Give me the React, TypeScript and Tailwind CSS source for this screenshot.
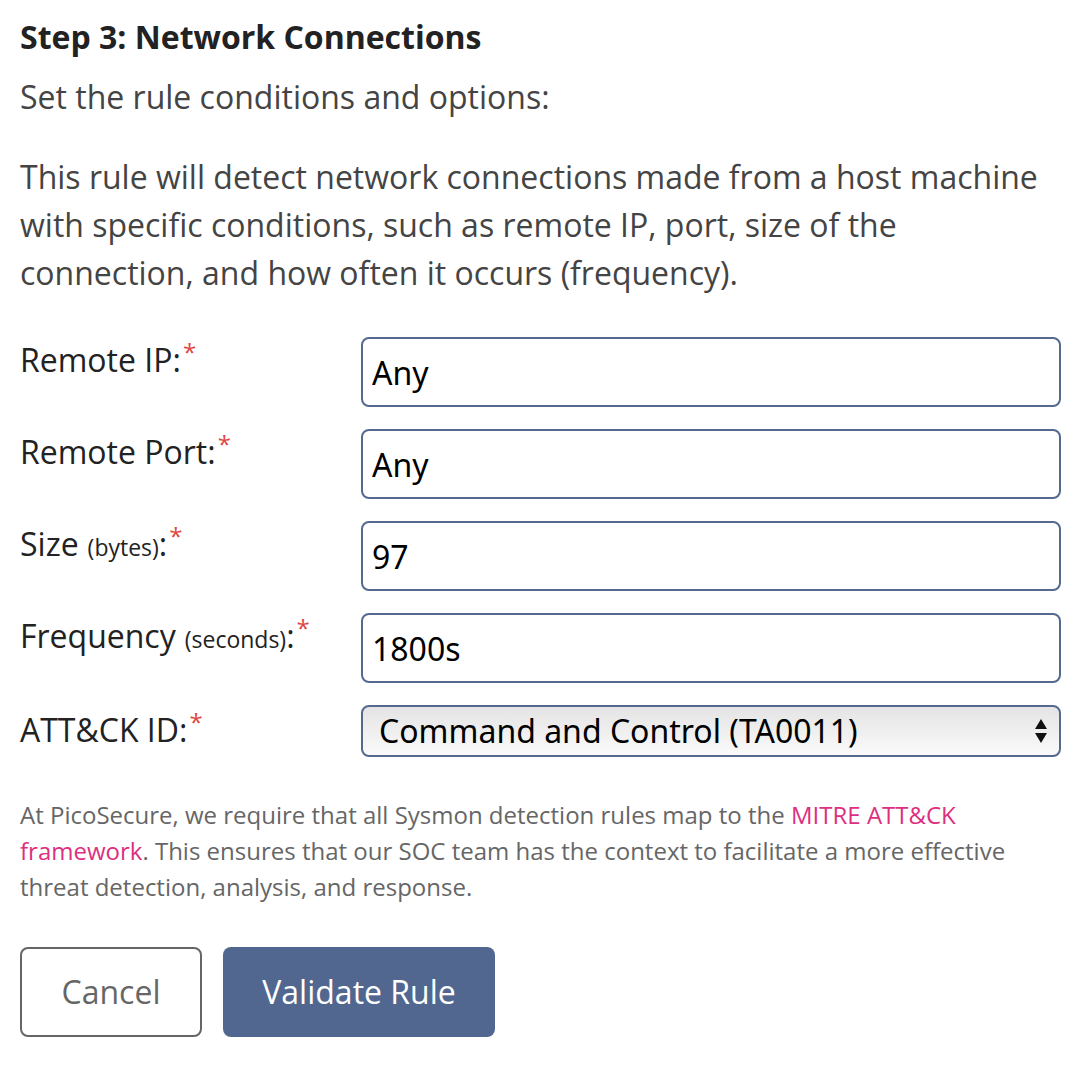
import React, { useState } from 'react';

const Req = () => <span className="text-[#e0463f] align-top text-[24px] leading-none ml-[2px]">*</span>;

const fields = [
  { label: 'Remote IP:', unit: '', value: 'Any' },
  { label: 'Remote Port:', unit: '', value: 'Any' },
  { label: 'Size', unit: '(bytes)', value: '97' },
  { label: 'Frequency', unit: '(seconds)', value: '1800s' },
];

export default function App() {
  const [values, setValues] = useState(fields.map((f) => f.value));
  const [tactic, setTactic] = useState('TA0011');

  return (
    <div className="min-h-screen bg-white px-5 pt-[15px] pr-[21px] font-['Open_Sans',sans-serif] text-[#333]">
      <h2 className="text-[32px] font-bold leading-[44px] text-[#222]">Step 3: Network Connections</h2>
      <p className="mt-[16px] text-[32px] leading-[44px] text-[#444]">Set the rule conditions and options:</p>
      <p className="mt-[34px] text-[32px] leading-[48px] text-[#444]">
        This rule will detect network connections made from a host machine with specific conditions, such as remote IP,
        port, size of the connection, and how often it occurs (frequency).
      </p>

      <form className="mt-[40px] flex flex-col gap-[22px]" onSubmit={(e) => e.preventDefault()}>
        {fields.map((f, i) => (
          <div key={f.label} className="flex">
            <label className="w-[341px] shrink-0 pt-[3px] text-[32px] leading-[40px] text-[#222]">
              {f.label}
              {f.unit && <span className="ml-[9px] text-[23px]">{f.unit}</span>}
              {f.unit && ':'}
              <Req />
            </label>
            <input
              value={values[i]}
              onChange={(e) => setValues(values.map((v, j) => (j === i ? e.target.value : v)))}
              className="h-[70px] flex-1 rounded-[8px] border-2 border-[#55698f] px-[9px] pt-[1px] font-['Noto_Sans',sans-serif] text-[32px] text-black outline-none"
            />
          </div>
        ))}

        <div className="flex">
          <label className="w-[341px] shrink-0 pt-[5px] text-[32px] leading-[40px] text-[#222]">
            ATT&amp;CK ID:<Req />
          </label>
          <div className="relative flex-1">
            <select
              value={tactic}
              onChange={(e) => setTactic(e.target.value)}
              className="h-[52px] w-full appearance-none rounded-[8px] border-2 border-[#55698f] bg-gradient-to-b from-[#e4e4e4] to-[#fafafa] pl-[16px] font-['Noto_Sans',sans-serif] text-[32px] text-black outline-none"
            >
              <option value="TA0011">Command and Control (TA0011)</option>
              <option value="TA0010">Exfiltration (TA0010)</option>
              <option value="TA0008">Lateral Movement (TA0008)</option>
            </select>
            <svg className="pointer-events-none absolute right-[13px] top-1/2 -translate-y-1/2" width="14" height="28" viewBox="0 0 14 28">
              <path d="M7 2 L13 12 H1 Z" fill="#111" />
              <path d="M7 26 L13 16 H1 Z" fill="#111" />
            </svg>
          </div>
        </div>
      </form>

      <p className="mt-[40px] text-[24px] leading-[36px] text-[#666]">
        At PicoSecure, we require that all Sysmon detection rules map to the{' '}
        <a href="#" className="text-[#dd2f7f]">MITRE ATT&amp;CK framework</a>. This ensures that our SOC team has the context to
        facilitate a more effective threat detection, analysis, and response.
      </p>

      <div className="mt-[42px] flex gap-[21px]">
        <button type="button" className="h-[90px] w-[182px] rounded-[8px] border-2 border-[#666] bg-white text-[32px] text-[#666]">
          Cancel
        </button>
        <button type="button" className="h-[90px] w-[272px] rounded-[8px] bg-[#51678f] text-[32px] text-white">
          Validate Rule
        </button>
      </div>
    </div>
  );
}
